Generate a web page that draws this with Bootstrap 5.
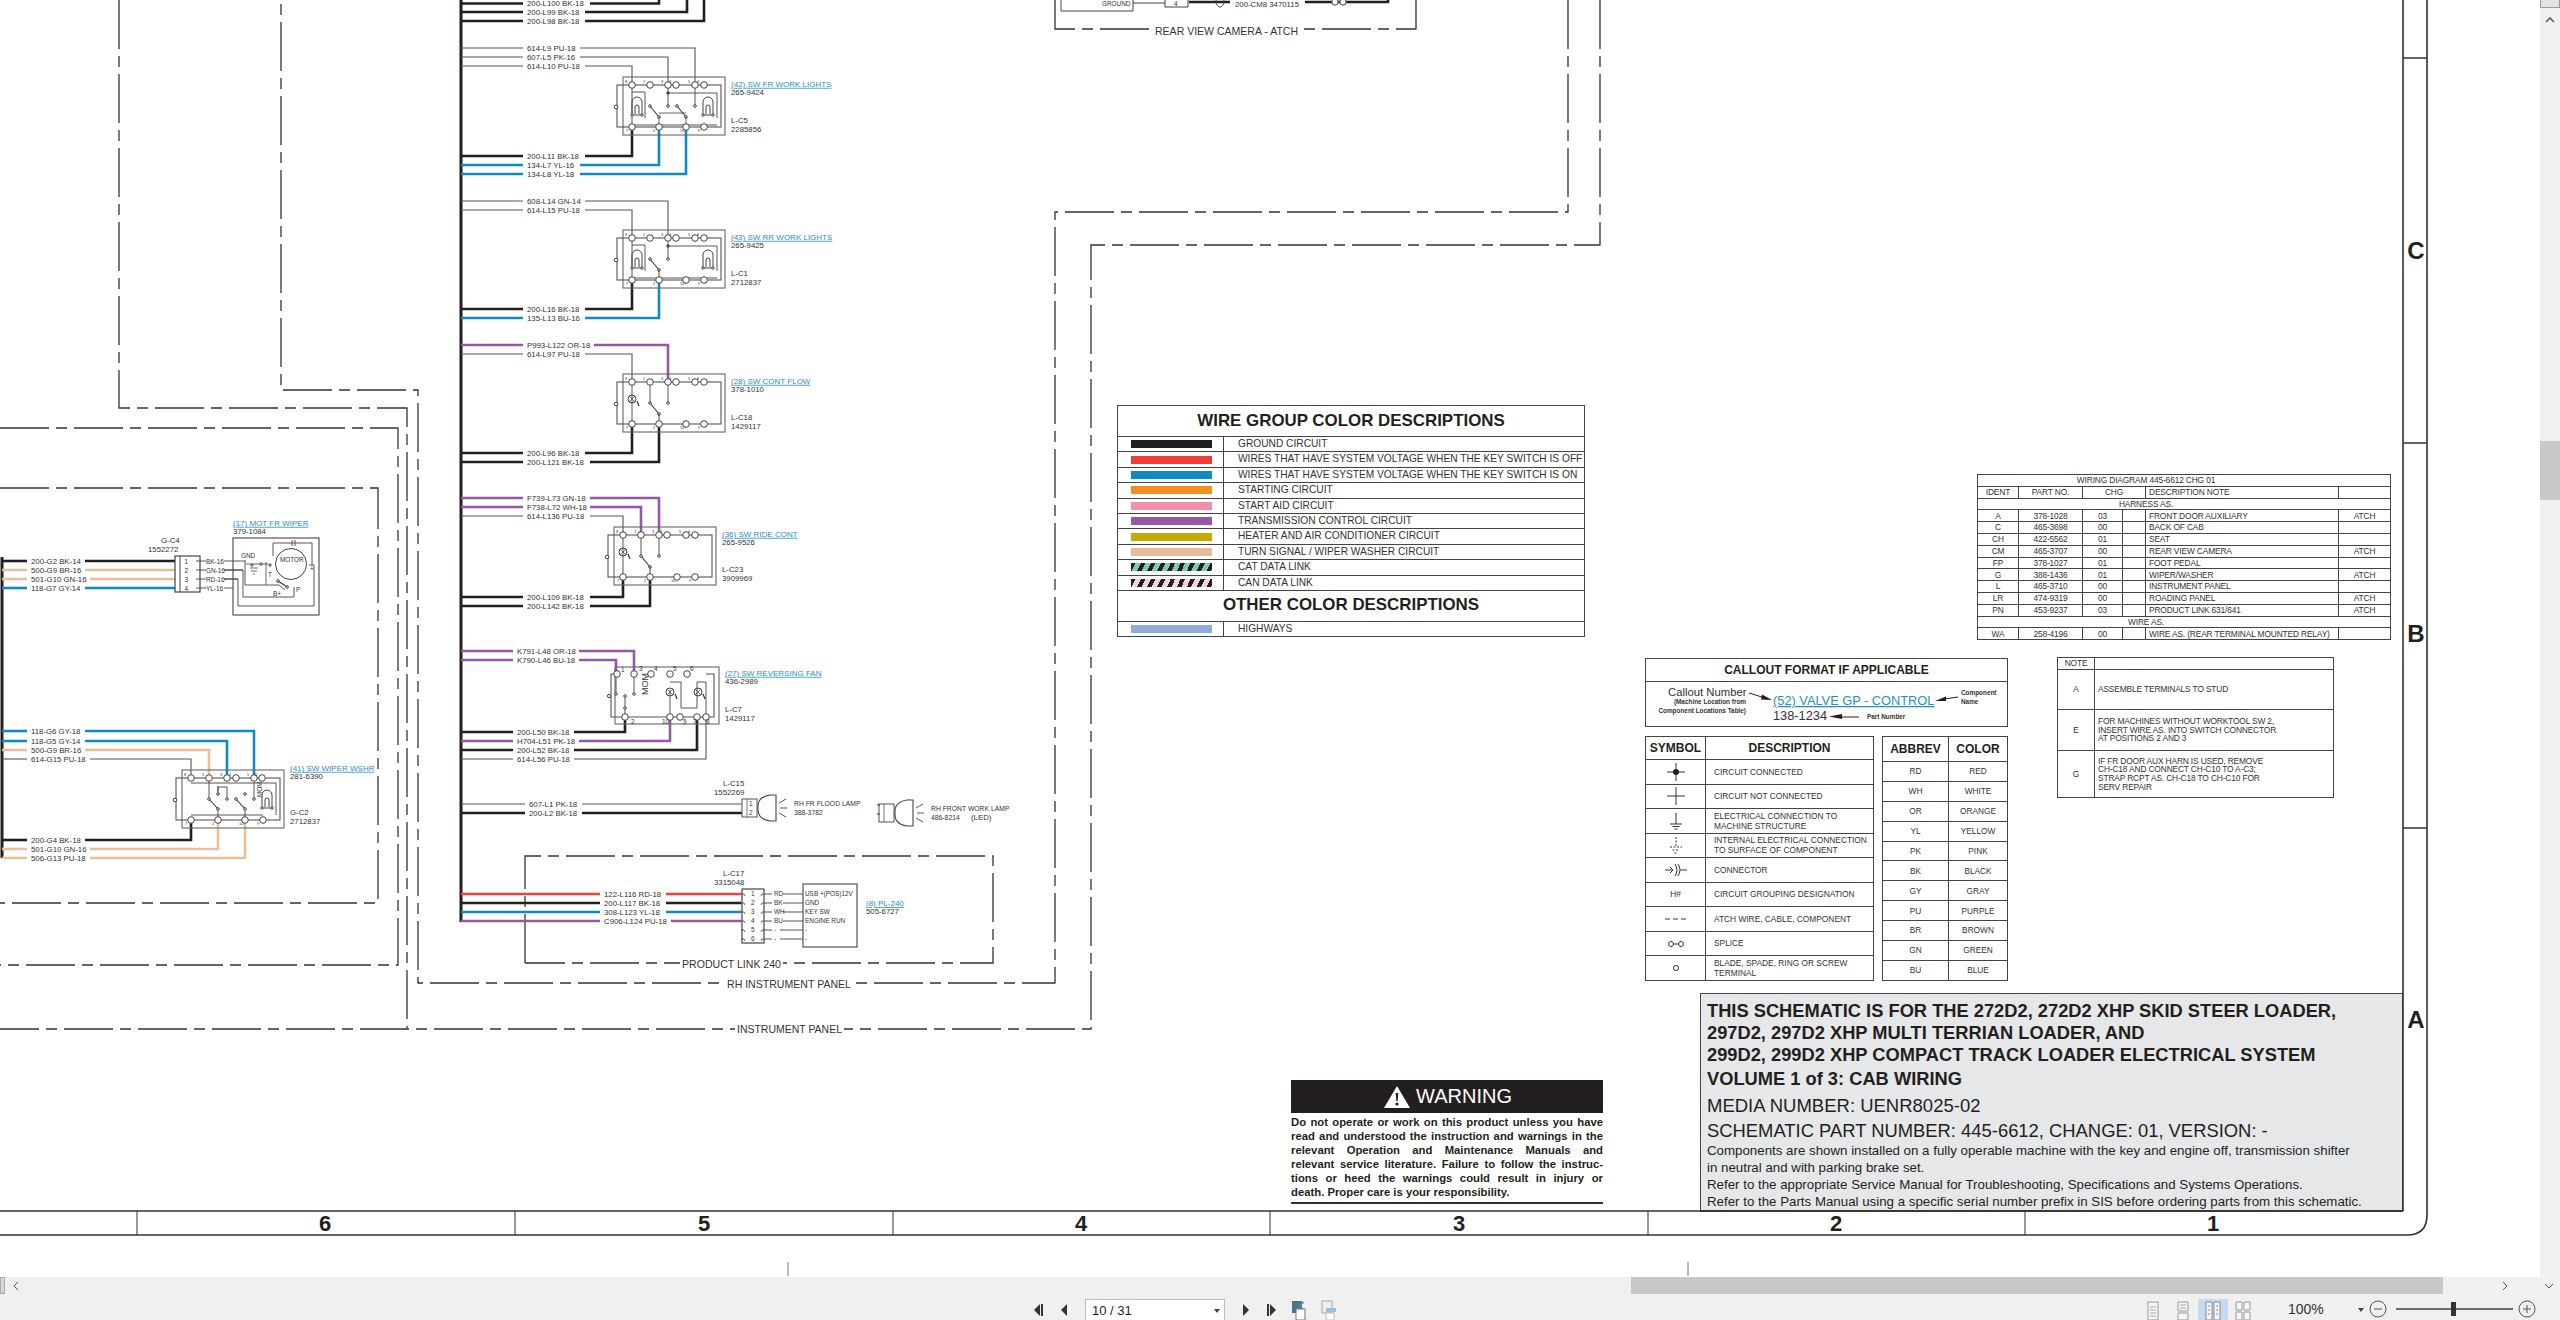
<!DOCTYPE html>
<html lang="en">
<head>
<meta charset="UTF-8">
<title>445-6612 Electrical Schematic</title>
<link href="https://cdn.jsdelivr.net/npm/bootstrap@5.3.0/dist/css/bootstrap.min.css" rel="stylesheet">
<style>
html,body{height:1320px;overflow:hidden;background:#fff}
body{font-family:"Liberation Sans",Arial,sans-serif;color:#231f20}
.view-row{height:1277px}
.sheet{width:2540px;height:1277px;overflow:hidden;background:#fff}
.sheet-svg{position:absolute;left:0;top:0;width:2540px;height:1277px}
.lb{font-size:7.8px;fill:#333}
.lk{font-size:8px;fill:#2a8fc0;text-decoration:underline}
.tiny{font-size:4px;fill:#333}
.sm{font-size:6.4px;fill:#333}
.fr{font-size:11.6px;fill:#333}
.rn{font-size:22px;font-weight:700;fill:#231f20;text-anchor:middle}
.zn{font-size:24px;font-weight:700;fill:#231f20;text-anchor:middle}
.block{position:absolute}
.tbl{margin:0;table-layout:fixed;--bs-table-border-color:#444;--bs-table-color:#333;border-color:#444}
.tbl>:not(caption)>*>*{padding:0;vertical-align:middle;line-height:1}
.wire-block{left:1117px;top:405px;width:468px}
.wire-tbl td{font-size:10.2px;height:15.4px;padding-left:14px}
.wire-tbl td.wt{font-size:16.9px;font-weight:700;text-align:center;height:31px;padding-left:0;color:#231f20}
.wire-tbl td.sw-cell{padding-left:13px}
.chip{display:block;width:81px;height:8px}
.chip-k{background:#231f20}.chip-r{background:#ef3e36}.chip-b{background:#0f8ac2}.chip-o{background:#f68d1f}
.chip-p{background:#f48fa8}.chip-u{background:#9558a3}.chip-y{background:#c4ab00}.chip-t{background:#e6bc98}
.chip-h{background:#8eaed8}
.chip-c{background:repeating-linear-gradient(115deg,#231f20 0 4px,#7ccbb0 4px 9px)}
.chip-n{background:repeating-linear-gradient(115deg,#231f20 0 4px,#f6d3dc 4px 9px)}
.callout-block{left:1645px;top:658px;width:363px;height:69px;border:1.5px solid #444}
.callout-head{height:23px;font-size:12px;font-weight:700;line-height:22px;text-align:center;border-bottom:1.5px solid #444}
.sym-block{left:1645px;top:736px;width:229px}
.sym-tbl td,.sym-tbl th{font-size:8.35px;height:24.5px}
.sym-tbl th{font-size:12px;height:23px;text-align:center;color:#231f20}
.sym-tbl td.dz{padding-left:8px;line-height:10px}
.sym-tbl td.ic{text-align:center}
.sym-tbl svg{display:inline-block;vertical-align:middle}
.abb-block{left:1882px;top:736px;width:126px}
.abb-tbl td,.abb-tbl th{font-size:8.3px;height:19.9px;text-align:center}
.abb-tbl th{font-size:12px;height:25px;color:#231f20}
.part-block{left:1977px;top:474px;width:414px}
.part-tbl td{font-size:8.4px;height:11.8px;text-align:center;letter-spacing:-.15px}
.part-tbl td.tl{text-align:left;padding-left:3px}
.part-tbl td.head-span{padding-right:76px}
.note-block{left:2057px;top:657px;width:277px}
.note-tbl td{font-size:8.4px;text-align:center;line-height:8.6px;letter-spacing:-.15px}
.note-tbl td.tl{text-align:left;padding-left:3px}
.warn-block{left:1291px;top:1080px;width:312px}
.warn-head{height:33px;background:#231f20;color:#fff;font-size:20px;line-height:33px}
.warn-body{margin-top:2px}
.warn-line{font-size:11.3px;font-weight:700;line-height:14px;height:14px;text-align:justify;text-align-last:justify;white-space:nowrap}
.warn-line.last{text-align-last:left}
.warn-rule{height:2px;background:#333;margin-top:3px}
.title-block{left:1700px;top:993px;width:703px;height:219px;background:#e6e7e8;border:1.5px solid #444;border-bottom-width:2.5px;padding:6px 0 0 6px}
.title-block p{margin:0;white-space:nowrap}
.t-b{font-size:18.3px;font-weight:700;line-height:22px}
.t-b.vol{line-height:26px}
.t-m{font-size:18.5px;line-height:28px}
.t-p{font-size:18.4px;line-height:22px}
.t-s{font-size:13.3px;line-height:17px}
.vbar{width:20px;background:#f0f0f0}
.vbar-top{height:8px;background:#e2e2e2;border:1px solid #999;border-top:0}
.vbar-chev{height:24px}
.vbar-gap{height:409px}
.vbar-thumb{height:59px;background:#c8c8c8}
.hbar{height:17px;background:#f0f0f0}
.hbar-stub{width:5px;background:#d8d8d8;border:1px solid #aaa}
.hbar-gap-a{width:1612px}
.hbar-thumb{width:812px;background:#c8c8c8}
.hbar-gap-b{width:59px}
.hbar-gap-c{width:36px}
.toolbar{height:26px;background:#f0f0f0;align-items:flex-end}
.tool-left{margin-left:1033px;height:21px;gap:17px}
.page-box{width:140px;height:21px;background:#fff;border:1px solid #bdbdbd;border-bottom:0;font-size:13px;line-height:21px;padding-left:6px;position:relative}
.page-caret{position:absolute;right:4px;top:9px;width:0;height:0;border:3px solid transparent;border-top:4px solid #444}
.tool-mid{margin-left:14px;gap:11px;height:21px}
.tool-right{margin-left:800px;height:21px}
.view-ic{width:30px;height:21px;display:flex;justify-content:center}
.view-ic.on{background:#c9d9ee}
.zoom-pc{width:67px;margin-left:30px;font-size:14px;line-height:21px;text-align:left;color:#333}
</style>
</head>
<body class="d-flex flex-column">
<div class="d-flex view-row">
  <div class="sheet position-relative flex-shrink-0">

    <div class="block wire-block">
      <table class="table table-bordered tbl wire-tbl">
        <colgroup><col style="width:106px"><col></colgroup>
        <tbody>
          <tr><td class="wt" colspan="2">WIRE GROUP COLOR DESCRIPTIONS</td></tr>
          <tr><td class="sw-cell"><span class="chip chip-k"></span></td><td>GROUND CIRCUIT</td></tr>
          <tr><td class="sw-cell"><span class="chip chip-r"></span></td><td>WIRES THAT HAVE SYSTEM VOLTAGE WHEN THE KEY SWITCH IS OFF</td></tr>
          <tr><td class="sw-cell"><span class="chip chip-b"></span></td><td>WIRES THAT HAVE SYSTEM VOLTAGE WHEN THE KEY SWITCH IS ON</td></tr>
          <tr><td class="sw-cell"><span class="chip chip-o"></span></td><td>STARTING CIRCUIT</td></tr>
          <tr><td class="sw-cell"><span class="chip chip-p"></span></td><td>START AID CIRCUIT</td></tr>
          <tr><td class="sw-cell"><span class="chip chip-u"></span></td><td>TRANSMISSION CONTROL CIRCUIT</td></tr>
          <tr><td class="sw-cell"><span class="chip chip-y"></span></td><td>HEATER AND AIR CONDITIONER CIRCUIT</td></tr>
          <tr><td class="sw-cell"><span class="chip chip-t"></span></td><td>TURN SIGNAL / WIPER WASHER CIRCUIT</td></tr>
          <tr><td class="sw-cell"><span class="chip chip-c"></span></td><td>CAT DATA LINK</td></tr>
          <tr><td class="sw-cell"><span class="chip chip-n"></span></td><td>CAN DATA LINK</td></tr>
          <tr><td class="wt" colspan="2">OTHER COLOR DESCRIPTIONS</td></tr>
          <tr><td class="sw-cell"><span class="chip chip-h"></span></td><td>HIGHWAYS</td></tr>
        </tbody>
      </table>
    </div>

    <div class="block part-block">
      <table class="table table-bordered tbl part-tbl">
        <colgroup><col style="width:41px"><col style="width:64px"><col style="width:40px"><col style="width:23px"><col style="width:193px"><col></colgroup>
        <tbody>
          <tr><td class="head-span" colspan="6">WIRING DIAGRAM 445-6612 CHG 01</td></tr>
          <tr><td>IDENT</td><td>PART NO.</td><td colspan="2">CHG</td><td class="tl">DESCRIPTION NOTE</td><td></td></tr>
          <tr><td class="head-span" colspan="6">HARNESS AS.</td></tr>
          <tr><td>A</td><td>378-1028</td><td>03</td><td></td><td class="tl">FRONT DOOR AUXILIARY</td><td>ATCH</td></tr>
          <tr><td>C</td><td>465-3698</td><td>00</td><td></td><td class="tl">BACK OF CAB</td><td></td></tr>
          <tr><td>CH</td><td>422-5562</td><td>01</td><td></td><td class="tl">SEAT</td><td></td></tr>
          <tr><td>CM</td><td>465-3707</td><td>00</td><td></td><td class="tl">REAR VIEW CAMERA</td><td>ATCH</td></tr>
          <tr><td>FP</td><td>378-1027</td><td>01</td><td></td><td class="tl">FOOT PEDAL</td><td></td></tr>
          <tr><td>G</td><td>388-1436</td><td>01</td><td></td><td class="tl">WIPER/WASHER</td><td>ATCH</td></tr>
          <tr><td>L</td><td>465-3710</td><td>00</td><td></td><td class="tl">INSTRUMENT PANEL</td><td></td></tr>
          <tr><td>LR</td><td>474-9319</td><td>00</td><td></td><td class="tl">ROADING PANEL</td><td>ATCH</td></tr>
          <tr><td>PN</td><td>453-9237</td><td>03</td><td></td><td class="tl">PRODUCT LINK 631/641</td><td>ATCH</td></tr>
          <tr><td class="head-span" colspan="6">WIRE AS.</td></tr>
          <tr><td>WA</td><td>258-4196</td><td>00</td><td></td><td class="tl">WIRE AS. (REAR TERMINAL MOUNTED RELAY)</td><td></td></tr>
        </tbody>
      </table>
    </div>

    <div class="block note-block">
      <table class="table table-bordered tbl note-tbl">
        <colgroup><col style="width:37px"><col></colgroup>
        <tbody>
          <tr style="height:12px"><td>NOTE</td><td></td></tr>
          <tr style="height:40px"><td>A</td><td class="tl">ASSEMBLE TERMINALS TO STUD</td></tr>
          <tr style="height:41px"><td>E</td><td class="tl">FOR MACHINES WITHOUT WORKTOOL SW 2,<br>INSERT WIRE AS. INTO SWITCH CONNECTOR<br>AT POSITIONS 2 AND 3</td></tr>
          <tr style="height:47px"><td>G</td><td class="tl">IF FR DOOR AUX HARN IS USED, REMOVE<br>CH-C18 AND CONNECT CH-C10 TO A-C3;<br>STRAP RCPT AS. CH-C18 TO CH-C10 FOR<br>SERV REPAIR</td></tr>
        </tbody>
      </table>
    </div>

    <div class="block callout-block"><div class="callout-head">CALLOUT FORMAT IF APPLICABLE</div></div>

    <div class="block sym-block">
      <table class="table table-bordered tbl sym-tbl">
        <colgroup><col style="width:60px"><col></colgroup>
        <thead><tr><th>SYMBOL</th><th>DESCRIPTION</th></tr></thead>
        <tbody>
          <tr><td class="ic"><svg width="20" height="20" viewBox="0 0 20 20"><path d="M1 10H19M10 1V19" stroke="#333" fill="none"/><circle cx="10" cy="10" r="3" fill="#231f20"/></svg></td><td class="dz">CIRCUIT CONNECTED</td></tr>
          <tr><td class="ic"><svg width="20" height="20" viewBox="0 0 20 20"><path d="M1 10H19M10 1V19" stroke="#333" fill="none"/></svg></td><td class="dz">CIRCUIT NOT CONNECTED</td></tr>
          <tr><td class="ic"><svg width="20" height="20" viewBox="0 0 20 20"><path d="M10 2V13M4 13H16M6.500 15.500H13.500M8.500 18H11.500" stroke="#333" fill="none"/></svg></td><td class="dz">ELECTRICAL CONNECTION TO<br>MACHINE STRUCTURE</td></tr>
          <tr><td class="ic"><svg width="20" height="20" viewBox="0 0 20 20"><path d="M10 2V12M4 12H16M6.500 15H13.500M8.500 18H11.500" stroke="#333" stroke-dasharray="2 1.500" fill="none"/></svg></td><td class="dz">INTERNAL ELECTRICAL CONNECTION<br>TO SURFACE OF COMPONENT</td></tr>
          <tr><td class="ic"><svg width="24" height="16" viewBox="0 0 24 16"><path d="M1 8H9M6 5L9 8L6 11M11 2Q15 8 11 14M14 2Q18 8 14 14M16.500 8H23" stroke="#333" fill="none"/></svg></td><td class="dz">CONNECTOR</td></tr>
          <tr><td class="ic">H#</td><td class="dz">CIRCUIT GROUPING DESIGNATION</td></tr>
          <tr><td class="ic"><svg width="24" height="6" viewBox="0 0 24 6"><path d="M1 3H23" stroke="#333" stroke-dasharray="5 3" fill="none"/></svg></td><td class="dz">ATCH WIRE, CABLE, COMPONENT</td></tr>
          <tr><td class="ic"><svg width="18" height="8" viewBox="0 0 18 8"><circle cx="4" cy="4" r="2.500" fill="none" stroke="#333"/><circle cx="14" cy="4" r="2.500" fill="none" stroke="#333"/><path d="M6.500 4H11.500" stroke="#333"/></svg></td><td class="dz">SPLICE</td></tr>
          <tr><td class="ic"><svg width="8" height="8" viewBox="0 0 8 8"><circle cx="4" cy="4" r="2.500" fill="none" stroke="#333"/></svg></td><td class="dz">BLADE, SPADE, RING OR SCREW<br>TERMINAL</td></tr>
        </tbody>
      </table>
    </div>

    <div class="block abb-block">
      <table class="table table-bordered tbl abb-tbl">
        <colgroup><col style="width:66px"><col></colgroup>
        <thead><tr><th>ABBREV</th><th>COLOR</th></tr></thead>
        <tbody>
          <tr><td>RD</td><td>RED</td></tr>
          <tr><td>WH</td><td>WHITE</td></tr>
          <tr><td>OR</td><td>ORANGE</td></tr>
          <tr><td>YL</td><td>YELLOW</td></tr>
          <tr><td>PK</td><td>PINK</td></tr>
          <tr><td>BK</td><td>BLACK</td></tr>
          <tr><td>GY</td><td>GRAY</td></tr>
          <tr><td>PU</td><td>PURPLE</td></tr>
          <tr><td>BR</td><td>BROWN</td></tr>
          <tr><td>GN</td><td>GREEN</td></tr>
          <tr><td>BU</td><td>BLUE</td></tr>
        </tbody>
      </table>
    </div>

    <div class="block warn-block">
      <div class="warn-head d-flex justify-content-center align-items-center gap-1">
        <svg width="30" height="24" viewBox="0 0 30 24"><path d="M15 1L28 23H2Z" fill="#fff"/><path d="M13.700 8H16.300L15.700 16H14.300Z" fill="#231f20"/><circle cx="15" cy="19" r="1.600" fill="#231f20"/></svg>
        <span>WARNING</span>
      </div>
      <div class="warn-body">
        <div class="warn-line">Do not operate or work on this product unless you have</div>
        <div class="warn-line">read and understood the instruction and warnings in the</div>
        <div class="warn-line">relevant Operation and Maintenance Manuals and</div>
        <div class="warn-line">relevant service literature. Failure to follow the instruc-</div>
        <div class="warn-line">tions or heed the warnings could result in injury or</div>
        <div class="warn-line last">death. Proper care is your responsibility.</div>
      </div>
      <div class="warn-rule"></div>
    </div>

    <div class="block title-block">
      <p class="t-b">THIS SCHEMATIC IS FOR THE 272D2, 272D2 XHP SKID STEER LOADER,</p>
      <p class="t-b">297D2, 297D2 XHP MULTI TERRIAN LOADER, AND</p>
      <p class="t-b">299D2, 299D2 XHP COMPACT TRACK LOADER ELECTRICAL SYSTEM</p>
      <p class="t-b vol">VOLUME 1 of 3: CAB WIRING</p>
      <p class="t-m">MEDIA NUMBER: UENR8025-02</p>
      <p class="t-p">SCHEMATIC PART NUMBER: 445-6612, CHANGE: 01, VERSION: -</p>
      <p class="t-s">Components are shown installed on a fully operable machine with the key and engine off, transmission shifter</p>
      <p class="t-s">in neutral and with parking brake set.</p>
      <p class="t-s">Refer to the appropriate Service Manual for Troubleshooting, Specifications and Systems Operations.</p>
      <p class="t-s">Refer to the Parts Manual using a specific serial number prefix in SIS before ordering parts from this schematic.</p>
    </div>

    <svg class="sheet-svg" id="diagram" viewBox="0 0 2540 1277"></svg>
  </div>

  <div class="vbar flex-shrink-0">
    <div class="vbar-top"></div>
    <div class="vbar-chev d-flex justify-content-center align-items-center">
      <svg width="10" height="6" viewBox="0 0 10 6"><path d="M1 5L5 1L9 5" fill="none" stroke="#555" stroke-width="1.500"/></svg>
    </div>
    <div class="vbar-gap"></div>
    <div class="vbar-thumb"></div>
  </div>
</div>

<div class="hbar d-flex align-items-stretch">
  <div class="hbar-stub"></div>
  <div class="d-flex align-items-center ms-2"><svg width="6" height="10" viewBox="0 0 6 10"><path d="M5 1L1 5L5 9" fill="none" stroke="#555"/></svg></div>
  <div class="hbar-gap-a"></div>
  <div class="hbar-thumb"></div>
  <div class="hbar-gap-b"></div>
  <div class="d-flex align-items-center"><svg width="6" height="10" viewBox="0 0 6 10"><path d="M1 1L5 5L1 9" fill="none" stroke="#555"/></svg></div>
  <div class="hbar-gap-c"></div>
  <div class="d-flex align-items-center"><svg width="10" height="6" viewBox="0 0 10 6"><path d="M1 1L5 5L9 1" fill="none" stroke="#555"/></svg></div>
</div>

<div class="toolbar d-flex">
  <div class="tool-left d-flex align-items-center">
    <svg width="11" height="16" viewBox="0 0 11 16"><path d="M7 2L1 8L7 14Z" fill="#333"/><rect x="8" y="2" width="2" height="12" fill="#333"/></svg>
    <svg width="7" height="16" viewBox="0 0 7 16"><path d="M6 2L0 8L6 14Z" fill="#333"/></svg>
    <div class="page-box">10 / 31<span class="page-caret"></span></div>
    <svg width="7" height="16" viewBox="0 0 7 16"><path d="M1 2L7 8L1 14Z" fill="#333"/></svg>
    <svg width="11" height="16" viewBox="0 0 11 16"><rect x="1" y="2" width="2" height="12" fill="#333"/><path d="M4 2L10 8L4 14Z" fill="#333"/></svg>
  </div>
  <div class="tool-mid d-flex align-items-center">
    <svg width="18" height="21" viewBox="0 0 18 21"><rect x="1" y="2" width="10" height="12" fill="#55708f"/><path d="M8 7L13 3M8 7L13 11" stroke="#2f9e6a" stroke-width="1.500"/><rect x="5" y="10" width="9" height="11" fill="#fff" stroke="#777"/></svg>
    <svg width="18" height="21" viewBox="0 0 18 21"><rect x="2" y="2" width="10" height="12" fill="#eee" stroke="#aaa"/><rect x="6" y="9" width="10" height="4" fill="#9cc0de"/><rect x="6" y="14" width="8" height="7" fill="#fff" stroke="#bbb"/></svg>
  </div>
  <div class="tool-right d-flex align-items-center">
    <div class="view-ic"><svg width="14" height="21" viewBox="0 0 14 21"><rect x="2" y="3" width="10" height="18" fill="#f6f6f6" stroke="#999"/><path d="M4 8H10M4 11H10M4 14H10M4 17H10" stroke="#aaa"/></svg></div>
    <div class="view-ic"><svg width="14" height="21" viewBox="0 0 14 21"><path d="M2 3H12V12H2ZM2 14H12V21H2Z" fill="#f6f6f6" stroke="#999"/><path d="M4 6H10M4 9H10" stroke="#aaa"/></svg></div>
    <div class="view-ic on"><svg width="16" height="21" viewBox="0 0 16 21"><path d="M1 3H7V21H1ZM9 3H15V21H9Z" fill="#f6f6f6" stroke="#889"/><path d="M3 7H5M3 11H5M3 15H5M11 7H13M11 11H13M11 15H13" stroke="#889"/></svg></div>
    <div class="view-ic"><svg width="16" height="21" viewBox="0 0 16 21"><path d="M1 3H7V11H1ZM9 3H15V11H9ZM1 13H7V21H1ZM9 13H15V21H9Z" fill="#f6f6f6" stroke="#999"/></svg></div>
    <div class="zoom-pc">100%</div>
    <svg width="190" height="21" viewBox="0 0 190 21"><path d="M3 9H9L6 13Z" fill="#444"/><circle cx="23" cy="10" r="8" fill="none" stroke="#555"/><path d="M19 10H27" stroke="#555"/><path d="M41 10H158" stroke="#444" stroke-width="1.500"/><rect x="96" y="3" width="5" height="14" fill="#333"/><circle cx="172" cy="10" r="8" fill="none" stroke="#555"/><path d="M168 10H176M172 6V14" stroke="#555"/></svg>
  </div>
</div>

<script>
const COL = {K:'#231f20', B:'#0f8ac2', P:'#9558a3', T:'#e9bf9b', R:'#e8453c', G:'#555'};
let out = '';

function path(d, c, w, extra) {
  out += `<path d="${d}" fill="none" stroke="${c || '#555'}" stroke-width="${w || 1}" ${extra || ''}/>`;
}
function txt(x, y, t, cls, extra) {
  out += `<text x="${x}" y="${y}" class="${cls || 'lb'}" ${extra || ''}>${t}</text>`;
}
function dot(x, y, r, fill, stroke) {
  out += `<circle cx="${x}" cy="${y}" r="${r}" fill="${fill || '#fff'}" stroke="${stroke || '#444'}"/>`;
}

// one wire: bus -> label -> on to the component (ye = where it turns to)
function wire(x0, lx, y, k, label, rx, xe, ye) {
  const w = k === 'G' ? 1.1 : 2.6;
  path(`M${x0} ${y}H${lx - 4}`, COL[k], w);
  path(`M${rx} ${y}H${xe}` + (ye !== undefined ? `V${ye}` : ''), COL[k], w);
  txt(lx, y + 2.8, label);
}
function compLabel(x, y, name, pn, conn, pn2, yc) {
  txt(x, y + 2.8, name, 'lk');
  txt(x, y + 10.8, pn);
  if (conn) { txt(x, yc, conn); txt(x, yc + 9, pn2); }
}
// rocker switch body
function body(x, y, tops, bots) {
  out += `<rect x="${x + 6}" y="${y - 8}" width="102" height="58" fill="none" stroke="#666" stroke-width="1.100"/>`;
  out += `<rect x="${x}" y="${y}" width="104" height="42" fill="none" stroke="#555" stroke-width="1.100"/>`;
  return {tops, bots, x, y};
}
function pins(b) {
  b.tops.forEach((d, i) => { dot(b.x + d, b.y, 3.3); txt(b.x + d - 7, b.y - 2, [8,1,3,4,5,6][i] || '', 'tiny'); });
  b.bots.forEach((d, i) => { dot(b.x + d, b.y + 42, 3.3); txt(b.x + d - 6, b.y + 47, [7,2,10,9][i] || '', 'tiny'); });
}
function toggle(x1, y1, x2, y2) {
  path(`M${x1} ${y1}L${x2} ${y2}`, '#333', 1.1);
  dot(x1, y1, 1.3); dot(x2, y2, 1.3);
}
function archLamp(cx, y) {
  path(`M${cx - 5} ${y + 17}V${y + 5}A5 5 0 0 1 ${cx + 5} ${y + 5}V${y + 17}`, '#444', 1);
  path(`M${cx - 2} ${y + 17}V${y + 10}A2 2 0 0 1 ${cx + 2} ${y + 10}V${y + 17}`, '#444', 1);
  path(`M${cx - 5} ${y + 18}H${cx + 5}`, '#444', 1);
  dot(cx - 5, y + 18, 1.2); dot(cx + 5, y + 18, 1.2);
}
function ledLamp(cx, cy) {
  dot(cx, cy, 4, 'none', '#444');
  path(`M${cx - 3} ${cy - 3}L${cx + 3} ${cy + 3}M${cx + 3} ${cy - 3}L${cx - 3} ${cy + 3}`, '#444', .7);
  path(`M${cx + 5} ${cy + 2}L${cx + 7} ${cy + 7}`, '#333', 1.200);
}
function lamp(x, y) {
  out += `<rect x="${x}" y="${y - 5}" width="15" height="18" fill="none" stroke="#555"/>`;
  path(`M${x + 5} ${y - 5}V${y + 13}`, '#555', .8);
  path(`M${x + 34} ${y - 9}H${x + 28}Q${x + 15} ${y - 7} ${x + 16} ${y + 4}Q${x + 15} ${y + 15} ${x + 28} ${y + 17}H${x + 34}Z`, '#444', 1.100);
  path(`M${x + 37} ${y - 1}L${x + 44} ${y - 5}M${x + 38} ${y + 4}H${x + 45}M${x + 37} ${y + 9}L${x + 44} ${y + 13}`, '#555', 1);
}
function dashed(d) { path(d, '#333', 1.300, 'stroke-dasharray="49 7 11 7"'); }
function frameLabel(x1, x2, y, t) {
  out += `<rect x="${x1 - 2}" y="${y - 7}" width="${x2 - x1 + 4}" height="14" fill="#fff"/>`;
  txt(x1, y + 4, t, 'fr', `textLength="${x2 - x1}" lengthAdjust="spacingAndGlyphs"`);
}

// --- dashed harness outlines
dashed('M1416 0V29H1055V0');
dashed('M1568 0V212H1055V983H418V390H281V0');
dashed('M1600 0V245H1091V1029H0');
dashed('M119 0V408H407V1029');
dashed('M0 428H398V965H0');
dashed('M0 488H378V903H0');
dashed('M525 963V856H993V963H525');
frameLabel(1155, 1298, 31, 'REAR VIEW CAMERA - ATCH');
frameLabel(682, 781, 964, 'PRODUCT LINK 240');
frameLabel(727, 851, 984, 'RH INSTRUMENT PANEL');
frameLabel(737, 842, 1029, 'INSTRUMENT PANEL');

// --- main ground bus, right hand
path('M461 0V922', COL.K, 3);
const B0 = 461, LX = 527;
wire(B0, LX, 3.5, 'K', '200-L100 BK-18', 590, 659, 0);
wire(B0, LX, 12, 'K', '200-L99 BK-18', 585, 687, 0);
wire(B0, LX, 21, 'K', '200-L98 BK-18', 585, 704, 0);

// SW FR WORK LIGHTS
wire(B0, LX, 48, 'G', '614-L9 PU-18', 580, 695, 85);
wire(B0, LX, 57, 'G', '607-L5 PK-16', 580, 668, 85);
wire(B0, LX, 66, 'G', '614-L10 PU-18', 585, 632, 85);
wire(B0, LX, 156, 'K', '200-L11 BK-18', 585, 632, 127);
wire(B0, LX, 165, 'B', '134-L7 YL-16', 580, 659, 127);
wire(B0, LX, 174, 'B', '134-L8 YL-18', 580, 686, 127);
let b = body(617, 85, [15,33,51,59,78,87], [15,42,69,87]);
path('M632 88V124M668 88V106M695 88V106M668 93H717V118M632 92H645V118M632 125H717', '#444', .9);
dot(668, 93, 1.200, '#333'); dot(668, 106, 1.300); dot(695, 106, 1.300);
toggle(650, 106, 659, 117); toggle(677, 106, 686, 117);
path('M659 117V125M686 117V125M659 113H686', '#555', .9);
archLamp(637, 97); archLamp(708, 97); dot(616, 107, 1.800);
pins(b);
compLabel(731, 84, '(42) SW FR WORK LIGHTS', '265-9424', 'L-C5', '2285856', 123);

// SW RR WORK LIGHTS
wire(B0, LX, 201, 'G', '608-L14 GN-14', 585, 668, 238);
wire(B0, LX, 210, 'G', '614-L15 PU-18', 585, 632, 238);
wire(B0, LX, 309, 'K', '200-L16 BK-18', 585, 632, 280);
wire(B0, LX, 318, 'B', '135-L13 BU-16', 585, 659, 280);
b = body(617, 238, [15,33,51,59,78,87], [15,42,69,87]);
path('M632 241V277M668 241V259M668 246H717V271M632 245H645V271M632 278H717', '#444', .9);
dot(668, 246, 1.200, '#333'); dot(668, 259, 1.300);
toggle(650, 259, 659, 270); path('M659 270V278', '#7a3a30', 1);
archLamp(637, 250); archLamp(708, 250); dot(616, 260, 1.800);
pins(b);
compLabel(731, 237, '(43) SW RR WORK LIGHTS', '265-9425', 'L-C1', '2712837', 276);

// SW CONT FLOW
wire(B0, LX, 345, 'P', 'P993-L122 OR-18', 594, 668, 382);
wire(B0, LX, 354, 'G', '614-L97 PU-18', 585, 632, 382);
wire(B0, LX, 453, 'K', '200-L96 BK-18', 585, 632, 424);
wire(B0, LX, 462, 'K', '200-L121 BK-18', 590, 659, 424);
b = body(617, 382, [15,33,51,59,78,87], [15,42,69,87]);
path('M632 385V421M650 385V403M668 385V403', '#444', .9);
dot(668, 403, 1.300);
toggle(650, 403, 659, 414); path('M659 414V421', '#444', 1);
ledLamp(632, 399); dot(616, 404, 1.800);
pins(b);
compLabel(731, 381, '(28) SW CONT FLOW', '378-1010', 'L-C18', '1429117', 420);

// SW RIDE CONT
wire(B0, LX, 498, 'P', 'F739-L73 GN-18', 590, 659, 535);
wire(B0, LX, 507, 'P', 'F738-L72 WH-18', 590, 641, 535);
wire(B0, LX, 516, 'G', '614-L136 PU-18', 590, 623, 535);
wire(B0, LX, 597, 'K', '200-L109 BK-18', 590, 623, 577);
wire(B0, LX, 606, 'K', '200-L142 BK-18', 590, 650, 577);
b = body(608, 535, [15,33,51,59,78,87], [15,42,69,87]);
path('M623 538V574M641 538V556M659 538V556', '#444', .9);
dot(659, 556, 1.300);
toggle(641, 556, 650, 567); path('M650 567V574', '#444', 1);
ledLamp(623, 552); dot(607, 557, 1.800);
pins(b);
compLabel(722, 534, '(36) SW RIDE CONT', '265-9526', 'L-C23', '3909969', 572);

// SW REVERSING FAN
wire(B0, 517, 651, 'P', 'K791-L48 OR-18', 579, 634, 674);
wire(B0, 517, 660, 'P', 'K790-L46 BU-18', 579, 616, 674);
wire(B0, 517, 732, 'K', '200-L50 BK-18', 574, 625, 717);
wire(B0, 517, 741, 'P', 'H704-L51 PK-18', 579, 670, 717);
wire(B0, 517, 750, 'K', '200-L52 BK-18', 574, 697, 717);
wire(B0, 517, 759, 'G', '614-L56 PU-18', 574, 706, 717);
out += `<rect x="615" y="667" width="104" height="57" fill="none" stroke="#666" stroke-width="1.100"/>`;
out += `<path d="M616 674H611V717H706M706 674H714V717H706" fill="none" stroke="#555" stroke-width="1.100"/>`;
path('M616 674V694M634 674V694M625 696V717M670 682H681V708H697V682H706V717M670 690V717', '#444', .9);
dot(616, 694, 1.300); dot(634, 694, 1.300); dot(625, 696, 1.300); dot(625, 708, 1.300); dot(609, 696, 1.600);
ledLamp(670, 692); ledLamp(698, 692);
[617,634,651,670,687].forEach(x => dot(x, 674, 3.300));
[625,670,680,697,706].forEach(x => dot(x, 717, 3.300));
[['1',621,672],['3',639,671],['4',654,671],['5',673,671],['6',690,671],['2',631,724],['10',662,724],['9',683,724],['7',693,724],['8',706,724]].forEach(p => txt(p[1], p[2], p[0], 'sm'));
txt(0, 0, 'MOM', 'lb', 'transform="translate(648,695) rotate(-90)" style="font-size:9px"');
compLabel(725, 673, '(27) SW REVERSING FAN', '436-2989', 'L-C7', '1429117', 712);

// flood lamps
wire(B0, 529, 804, 'G', '607-L1 PK-18', 582, 742);
wire(B0, 529, 813, 'K', '200-L2 BK-18', 582, 742);
lamp(742, 804);
txt(749, 806, '1', 'sm'); txt(749, 815, '2', 'sm');
txt(723, 786, 'L-C15'); txt(714, 795, '1552269');
txt(794, 806, 'RH FR FLOOD LAMP', 'lb', 'style="font-size:6.8px"');
txt(794, 815, '388-3782', 'lb', 'style="font-size:6.8px"');
lamp(879, 809);
path('M877 805H880M877 814H880', '#333', 1);
txt(931, 811, 'RH FRONT WORK LAMP', 'lb', 'style="font-size:6.8px"');
txt(931, 820, '486-8214', 'lb', 'style="font-size:6.8px"');
txt(971, 820, '(LED)');

// product link
wire(B0, 604, 894, 'R', '122-L116 RD-18', 666, 741);
wire(B0, 604, 903, 'K', '200-L117 BK-18', 666, 741);
wire(B0, 604, 912, 'B', '308-L123 YL-18', 666, 741);
wire(B0, 604, 921, 'P', 'C906-L124 PU-18', 671, 741);
out += `<rect x="742" y="889" width="22" height="54" fill="none" stroke="#444" stroke-width="1.200"/>`;
['1','2','3','4','5','6'].forEach((n, i) => {
  const y = 894 + i * 9;
  txt(751, y + 2.300, n, 'sm');
  path(`M741 ${y}Q745 ${y - 1} 745 ${y + 2}M761 ${y + 2}Q761 ${y - 1} 765 ${y}`, '#444', .8);
  path(`M765 ${y}H772M${i < 4 ? 783 : 780} ${y}H803`, '#444', .9);
  txt(774, y + 2.300, ['RD','BK','WH','BU','-','-'][i], 'sm');
  txt(805, y + 2.300, ['USB +(POS)12V','GND','KEY SW','ENGINE RUN','-','-'][i], 'sm');
});
out += `<rect x="803" y="884" width="54" height="63" fill="none" stroke="#444" stroke-width="1.100"/>`;
txt(723, 876, 'L-C17'); txt(714, 885, '3315048');
txt(866, 906, '(8) PL-240', 'lk'); txt(866, 914, '505-6727');

// camera stub top of the sheet
path('M1061 0V11H1133V0M1133 3H1165', '#444', 1);
txt(1102, 6, 'GROUND', 'sm');
path('M1165 0V7H1188V0', '#444', 1);
txt(1174, 6, '4', 'sm');
path('M1189 2H1230M1305 2H1388V0', COL.K, 2.600);
out += `<ellipse cx="1220" cy="1" rx="4" ry="6" fill="none" stroke="#444"/>`;
dot(1335, 2, 3.200); dot(1343, 2, 3.200);
txt(1235, 6.500, '200-CM8 3470115');

// --- wiper motor connector, left hand
path('M2 557V858', COL.K, 3);
wire(2, 31, 561, 'K', '200-G2 BK-14', 85, 175);
wire(2, 31, 570, 'T', '500-G9 BR-16', 85, 175);
wire(2, 31, 579, 'T', '501-G10 GN-16', 90, 175);
wire(2, 31, 588, 'B', '118-G7 GY-14', 85, 175);
out += `<rect x="175" y="556" width="25" height="36" fill="none" stroke="#444" stroke-width="1.200"/>`;
path('M180 556V592', '#444', 1);
['1','2','3','4'].forEach((n, i) => {
  const y = 561 + i * 9;
  txt(184.500, y + 2.500, n, 'sm');
  path(`M196 ${y}H206M224 ${y}H${[246,243,238,0][i] || 233}`, '#444', .9);
  txt(206, y + 2.500, ['BK-16','GN-16','RD-16','YL-16'][i], 'sm');
});
txt(161, 543, 'G-C4'); txt(148, 552, '1552272');
compLabel(233, 523, '(17) MOT FR WIPER', '379-1084');
out += `<rect x="233" y="538" width="86" height="77" fill="none" stroke="#444" stroke-width="1.100"/>`;
dot(291, 564, 15.500, 'none', '#444');
txt(280, 562, 'MOTOR', 'sm');
txt(241, 558, 'GND', 'sm');
path('M245 561V585H279L285 590M224 570H243V597H294V587M224 579H238V606H314V565H309M273 543H312V565M273 543V556', '#444', .9);
path('M292 540V546M295 540V546', '#444', .9);
path('M246 564H254H258H268M266 562V585M250 568H258M251 571H257M253 574H255', '#444', .8);
toggle(278, 581, 287, 587);
dot(252, 565, 1.200); dot(261, 564, 1.200); dot(270, 565, 1.200);
txt(273, 596, 'B+', 'sm'); txt(296, 592, 'P', 'sm'); txt(310, 571, '+', 'sm'); txt(268, 577, 'T', 'sm');

// SW WIPER WSHR
wire(2, 31, 731, 'B', '118-G6 GY-18', 85, 254, 778);
wire(2, 31, 741, 'B', '118-G5 GY-14', 85, 227, 778);
wire(2, 31, 750, 'T', '500-G9 BR-16', 85, 209, 778);
wire(2, 31, 759, 'G', '614-G15 PU-18', 90, 191, 778);
wire(2, 31, 840, 'K', '200-G4 BK-18', 85, 191, 820);
wire(2, 31, 849, 'T', '501-G10 GN-16', 90, 218, 820);
wire(2, 31, 858, 'T', '506-G13 PU-18', 90, 245, 820);
b = body(176, 778, [15,33,51,60,78,86], [15,42,69,87]);
path('M209 781V798M191 783H276V815M218 808V817M218 786V795M254 782V798M245 808V817', '#444', .9);
path('M218 787V793M218 787H227V798', '#444', .9);
toggle(209, 799, 218, 809); toggle(236, 799, 245, 809);
dot(218, 794, 1.300); dot(227, 799, 1.300); dot(245, 794, 1.300); dot(254, 799, 1.300);
archLamp(267, 790); dot(175, 800, 1.800);
path('M191 815H263', '#444', .9);
pins(b);
txt(0, 0, 'MOM', 'sm', 'transform="translate(262,797) rotate(-90)"');
compLabel(290, 768, '(41) SW WIPER WSHR', '281-6390', 'G-C2', '2712837', 815);

// --- callout legend
txt(1668, 696, 'Callout Number', 'lb', 'style="font-size:11.300px"');
txt(1746, 704, '(Machine Location from', 'lb', 'text-anchor="end" style="font-size:6.400px;font-weight:700"');
txt(1746, 713, 'Component Locations Table)', 'lb', 'text-anchor="end" style="font-size:6.400px;font-weight:700"');
txt(1773, 705, '(52) VALVE GP - CONTROL', 'lk', 'style="font-size:12.800px"');
txt(1773, 720, '138-1234', 'lb', 'style="font-size:12.800px"');
txt(1961, 695, 'Component', 'lb', 'style="font-size:6.400px;font-weight:700"');
txt(1961, 704, 'Name', 'lb', 'style="font-size:6.400px;font-weight:700"');
txt(1867, 719, 'Part Number', 'lb', 'style="font-size:6.400px;font-weight:700"');
path('M1749 693L1765 698', '#231f20', 1);
out += '<path d="M1772 700L1762 694.500L1761 699.500Z" fill="#231f20"/>';
path('M1958 697L1944 699', '#231f20', 1);
out += '<path d="M1935 701L1946 696.500L1946 701Z" fill="#231f20"/>';
path('M1859 717H1840', '#231f20', 1);
out += '<path d="M1829 716.500L1842 714V719Z" fill="#231f20"/>';

// --- sheet border and zone rulers
path('M0 1211H2403M0 1235H2407Q2427 1235 2427 1215V0M2403 0V1211', '#333', 1.600);
path('M137 1211V1235M515 1211V1235M893 1211V1235M1270 1211V1235M1648 1211V1235M2025 1211V1235', '#333', 1);
path('M2403 58H2427M2403 443H2427M2403 828H2427', '#333', 1.600);
[[325,'6'],[704,'5'],[1081,'4'],[1459,'3'],[1836,'2'],[2213,'1']].forEach(r => txt(r[0], 1231, r[1], 'rn'));
[[250,'C'],[633,'B'],[1019,'A']].forEach(r => txt(2416, r[0] + 8.500, r[1], 'zn'));

// page-break ticks in the viewer
path('M788 1262V1276M1688 1262V1276', '#777', 1);

document.getElementById('diagram').innerHTML = out;
</script>
<script src="https://cdn.jsdelivr.net/npm/bootstrap@5.3.0/dist/js/bootstrap.bundle.min.js"></script>
</body>
</html>
